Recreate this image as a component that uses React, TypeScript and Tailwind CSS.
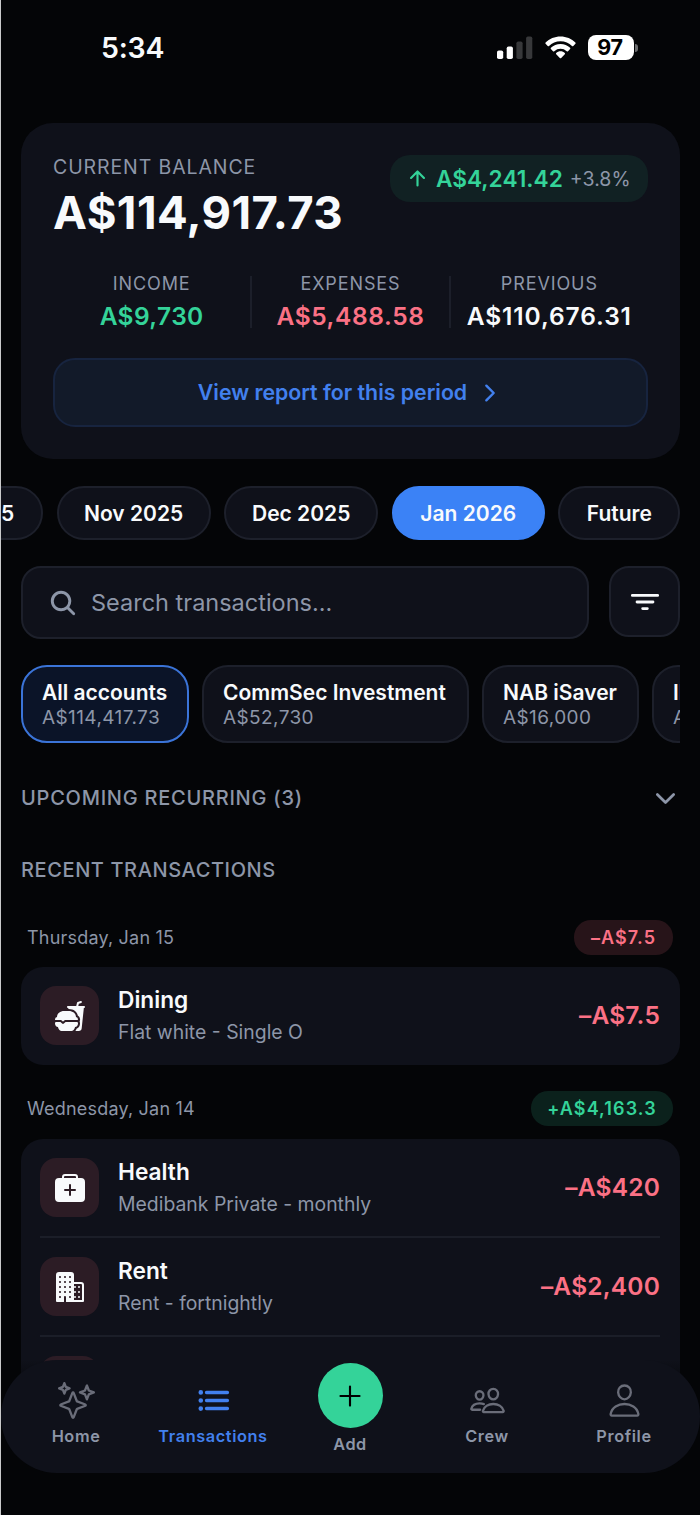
import type { ReactNode } from "react";
import type { IconType } from "react-icons";
import {
    IoAdd,
    IoArrowUp,
    IoBusiness,
    IoChevronDown,
    IoChevronForward,
    IoFastFood,
    IoFilter,
    IoList,
    IoMedkit,
    IoPeopleOutline,
    IoPersonOutline,
    IoSearch,
    IoSparklesOutline,
} from "react-icons/io5";

const accounts = [
    { name: "All accounts", amount: "A$114,417.73", style: "w-[168px] border-[#3b74d8] bg-[#0b1428]" },
    { name: "CommSec Investment", amount: "A$52,730", style: "w-[267px] border-[#1d202b] bg-[#0f111a]" },
    { name: "NAB iSaver", amount: "A$16,000", style: "w-[157px] border-[#1d202b] bg-[#0f111a]" },
    { name: "ING Savings", amount: "A$24,500", style: "w-[180px] border-[#1d202b] bg-[#0f111a]" },
];

const months = [
    { label: "Oct 2025", style: "w-[152px] border-[#1d202b] bg-[#0f111a]" },
    { label: "Nov 2025", style: "w-[154px] border-[#1d202b] bg-[#0f111a]" },
    { label: "Dec 2025", style: "w-[154px] border-[#1d202b] bg-[#0f111a]" },
    { label: "Jan 2026", style: "w-[153px] border-[#3b82f6] bg-[#3b82f6]" },
    { label: "Future", style: "w-[122px] border-[#1d202b] bg-[#0f111a]" },
];

function StatusBar() {
    return (
        <div className="flex h-[95px] items-center justify-between pr-[62px] pl-[100px]">
            <span className="mt-0.5 text-[28.500px] font-semibold tracking-[-0.2px]">5:34</span>
            <div className="flex items-center">
                <svg className="mr-3 h-6 w-9" viewBox="0 0 36 24">
                    <rect x="0" y="14.500" width="6.2" height="8.500" rx="1.8" fill="#fff" />
                    <rect x="9.7" y="10.500" width="6.2" height="12.500" rx="1.8" fill="#fff" />
                    <rect x="19.4" y="5.500" width="6.2" height="17.500" rx="1.8" fill="#37383a" />
                    <rect x="29.1" y="0.500" width="6.2" height="22.500" rx="1.8" fill="#37383a" />
                </svg>
                <svg className="mr-3 h-[23px] w-[31px]" viewBox="0 0 31 23" fill="#fff">
                    <path d="M15.5 0.5C21.3 0.5 26.6 2.8 30.4 6.5c.4.4.4.9 0 1.3l-2.1 2.1c-.4.4-.9.4-1.3 0C24 7 20 5.300 15.500 5.300S7 7 4 9.900c-.4.4-.9.4-1.300 0L.6 7.800c-.4-.4-.4-.9 0-1.300C4.400 2.800 9.700.5 15.500.5z" />
                    <path d="M15.500 8c3.700 0 7.100 1.400 9.600 3.800.4.4.4.9 0 1.300L23 15.200c-.4.4-.9.4-1.300 0a9 9 0 0 0-12.400 0c-.4.4-.9.4-1.300 0l-2.100-2.100c-.4-.4-.4-.9 0-1.300C8.400 9.400 11.800 8 15.500 8z" />
                    <path d="M15.500 15.300c1.700 0 3.200.6 4.300 1.600.4.4.4.9 0 1.300L16.200 21.900c-.4.4-1 .4-1.400 0l-3.600-3.700c-.4-.4-.4-.9 0-1.300 1.100-1 2.600-1.600 4.300-1.600z" />
                </svg>
                <div className="flex h-[25px] w-[46px] items-center justify-center rounded-lg bg-white pr-0.5 text-[21.500px] leading-none font-bold tracking-[-0.3px] text-black">
                    97
                </div>
                <div className="ml-px h-2 w-[3px] rounded-r-full bg-[#6b6c6e]" />
            </div>
        </div>
    );
}

function Stat({ label, value, style }: { label: string; value: string; style: string }) {
    return (
        <div className="flex flex-1 flex-col items-center whitespace-nowrap">
            <span className="mt-0.5 text-[18px] leading-[22px] tracking-[0.9px] text-[#8d96a8]">{label}</span>
            <span className={`mt-[7px] text-[24.500px] leading-[28px] font-semibold ${style}`}>{value}</span>
        </div>
    );
}

function BalanceCard() {
    return (
        <section className="mt-7 flex h-[336px] flex-col rounded-[32px] bg-[#0f111a] px-8 pt-8">
            <div className="flex items-start justify-between">
                <div>
                    <p className="text-[19.5px] leading-[25px] tracking-[0.9px] text-[#8d96a8]">CURRENT BALANCE</p>
                    <p className="h-[66px] text-[45.500px] leading-[65px] font-bold tracking-[0.4px]">A$114,917.73</p>
                </div>
                <div className="flex h-[47px] w-[258px] items-center rounded-[20px] bg-[#112123] pl-[16px] whitespace-nowrap">
                    <IoArrowUp className="size-[23px] text-[#34d399]" />
                    <span className="ml-[7px] pt-px text-[22.700px] font-semibold text-[#34d399]">A$4,241.42</span>
                    <span className="ml-[7px] pt-0.5 text-[19.500px] text-[#8d96a8]">+3.8%</span>
                </div>
            </div>
            <div className="mt-[25px] flex h-[60px]">
                <Stat label="INCOME" value="A$9,730" style="tracking-[0.4px] text-[#34d399]" />
                <div className="mt-[5px] h-[52px] w-[1.5px] bg-[#1c1f2a]" />
                <Stat label="EXPENSES" value="A$5,488.58" style="tracking-[0.6px] text-[#fb7185]" />
                <div className="mt-[5px] h-[52px] w-[1.5px] bg-[#1c1f2a]" />
                <Stat label="PREVIOUS" value="A$110,676.31" style="tracking-[0.9px] text-[#f8fafc]" />
            </div>
            <button className="mt-[27px] flex h-[69px] items-center justify-center gap-[10px] rounded-[22px] border-2 border-[#17243f] bg-[#121a29] text-[#4280ee]">
                <span className="text-[21.300px] font-semibold">View report for this period</span>
                <IoChevronForward className="size-[26px]" />
            </button>
        </section>
    );
}

function Months() {
    return (
        <div className="mt-[27px] -mr-5 -ml-5 overflow-hidden">
            <div className="-ml-[110px] flex h-[54px] w-max gap-[13.600px]">
                {months.map((m) => (
                    <div
                        key={m.label}
                        className={`flex items-center justify-center rounded-[27px] border-2 pt-0.5 text-[21px] font-semibold ${m.style}`}
                    >
                        {m.label}
                    </div>
                ))}
            </div>
        </div>
    );
}

function Search() {
    return (
        <div className="mt-[26px] flex items-start gap-5">
            <div className="flex h-[73px] flex-1 items-center rounded-[20px] border-2 border-[#1d202b] bg-[#0f111a] pl-[25px] text-[#8d96a8]">
                <IoSearch className="size-[30px]" />
                <span className="ml-[13px] text-[23.500px]">Search transactions...</span>
            </div>
            <button className="flex h-[71px] w-[71px] items-center justify-center rounded-[20px] border-2 border-[#1d202b] bg-[#0f111a]">
                <IoFilter className="size-[30px]" />
            </button>
        </div>
    );
}

function Accounts() {
    return (
        <div className="mt-[26px] overflow-hidden">
            <div className="flex h-[78px] w-max gap-[13px]">
                {accounts.map((a) => (
                    <div key={a.name} className={`rounded-[26px] border-2 pt-[13px] pl-[19px] whitespace-nowrap ${a.style}`}>
                        <p className="text-[21px] leading-[26px] font-semibold">{a.name}</p>
                        <p className="text-[19px] leading-[24px] tracking-[0.4px] text-[#8d96a8]">{a.amount}</p>
                    </div>
                ))}
            </div>
        </div>
    );
}

function DayHeader({ date, total, style }: { date: string; total: string; style: string }) {
    return (
        <div className="flex h-[35px] items-center justify-between pr-[7px] pl-[6px]">
            <span className="text-[18px] tracking-[0.2px] text-[#8d96a8]">{date}</span>
            <span className={`flex h-[35px] items-center justify-center rounded-[17px] text-[18px] font-semibold tracking-[1.1px] ${style}`}>
                {total}
            </span>
        </div>
    );
}

function Row({ icon, title, note, amount }: { icon: ReactNode; title: string; note: string; amount: string }) {
    return (
        <div className="box-content flex h-[97px] items-center">
            <div className="flex size-[59px] items-center justify-center rounded-2xl bg-[#2c1c25] text-[32px]">{icon}</div>
            <div className="ml-[19px] flex-1 pt-0.5">
                <p className="text-[22.700px] leading-[32px] font-semibold">{title}</p>
                <p className="text-[19.400px] leading-[33px] text-[#8d96a8]">{note}</p>
            </div>
            <span className="text-[24.5px] font-semibold tracking-[0.2px] text-[#fb7185]">{amount}</span>
        </div>
    );
}

function NavItem({ icon: Icon, label, active }: { icon: IconType; label: string; active?: boolean }) {
    return (
        <div className={`flex w-[137px] flex-col items-center pt-[22px] ${active ? "text-[#4280ee]" : "text-[#8d96a8]"}`}>
            <Icon className={`size-[37px] ${active ? "" : "text-[#6a6d79]"}`} />
            <span className="mt-[6px] text-[16.300px] leading-[23px] font-semibold tracking-[0.6px]">{label}</span>
        </div>
    );
}

function BottomNav() {
    return (
        <nav className="absolute right-0 bottom-0 left-0 h-[155px] bg-linear-to-b from-transparent to-[#040507] to-25%">
            <div className="flex h-[113px] justify-center rounded-[56px] bg-[#0f111a] pr-px">
                <NavItem icon={IoSparklesOutline} label="Home" />
                <NavItem icon={IoList} label="Transactions" active />
                <div className="flex w-[137px] flex-col items-center pt-[3px]">
                    <div className="flex size-[65px] items-center justify-center rounded-full bg-[#34d399] text-black">
                        <IoAdd className="size-[34px]" />
                    </div>
                    <span className="mt-[5px] text-[16.300px] leading-[23px] font-semibold tracking-[0.5px] text-[#8d96a8]">Add</span>
                </div>
                <NavItem icon={IoPeopleOutline} label="Crew" />
                <NavItem icon={IoPersonOutline} label="Profile" />
            </div>
        </nav>
    );
}

export default function App() {
    return (
        <div className="relative h-[1515px] w-[700px] overflow-hidden border-l border-[#c9cacb] bg-[#040507] font-['Inter','Liberation_Sans',sans-serif] text-[#f8fafc]">
            <StatusBar />
            <main className="px-5">
                <BalanceCard />
                <Months />
                <Search />
                <Accounts />
                <div className="mt-[41px] flex h-7 items-center justify-between text-[#8d96a8]">
                    <h2 className="text-[20px] font-medium tracking-[0.750px]">UPCOMING RECURRING (3)</h2>
                    <IoChevronDown className="size-[29px]" />
                </div>
                <h2 className="mt-[44px] h-7 text-[20px] leading-7 font-medium tracking-[0.600px] text-[#8d96a8]">RECENT TRANSACTIONS</h2>
                <div className="mt-[36px]">
                    <DayHeader date="Thursday, Jan 15" total="–A$7.5" style="w-[99px] bg-[#271419] text-[#fb7185]" />
                    <div className="mt-3 rounded-[22px] bg-[#0f111a] pr-5 pb-px pl-[19px]">
                        <Row icon={<IoFastFood />} title="Dining" note="Flat white - Single O" amount="–A$7.5" />
                    </div>
                </div>
                <div className="mt-[26px]">
                    <DayHeader date="Wednesday, Jan 14" total="+A$4,163.3" style="w-[142px] bg-[#0b211c] text-[#34d399]" />
                    <div className="mt-[13px] divide-y-2 divide-[#1b1e28] rounded-[22px] bg-[#0f111a] pr-5 pl-[19px]">
                        <Row icon={<IoMedkit />} title="Health" note="Medibank Private - monthly" amount="–A$420" />
                        <Row icon={<IoBusiness />} title="Rent" note="Rent - fortnightly" amount="–A$2,400" />
                        <Row icon={<IoFastFood />} title="Groceries" note="Woolworths" amount="–A$86.2" />
                    </div>
                </div>
            </main>
            <BottomNav />
        </div>
    );
}
